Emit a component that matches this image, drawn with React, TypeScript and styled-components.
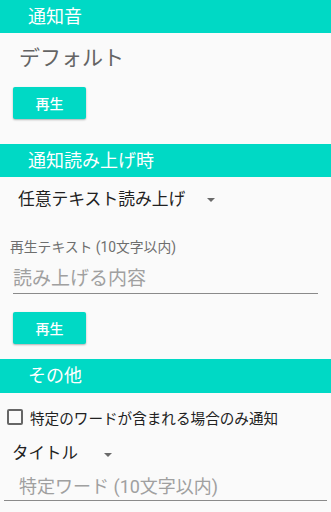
import React from "react";
import styled, { createGlobalStyle } from "styled-components";

const Global = createGlobalStyle`
  html, body { margin: 0; padding: 0; background: #fafafa; }
  body { font-family: Roboto, "Noto Sans CJK JP", sans-serif; }
  * { box-sizing: border-box; }
`;

const TEAL = "#00d9c5";

const Page = styled.div`
  width: 331px;
  height: 512px;
  overflow: hidden;
  background: #fafafa;
  display: flex;
  flex-direction: column;
`;

const Header = styled.div<{ $h?: number }>`
  height: ${(p) => p.$h ?? 33}px;
  background: ${TEAL};
  color: #ffffff;
  font-size: 18px;
  line-height: ${(p) => p.$h ?? 33}px;
  padding-left: 28px;
  flex-shrink: 0;
`;

const Section = styled.div<{ $pb: number }>`
  display: flex;
  flex-direction: column;
  align-items: flex-start;
  padding-bottom: ${(p) => p.$pb}px;
`;

const SoundName = styled.div`
  margin: 10px 0 0 19px;
  font-size: 21px;
  line-height: 30px;
  color: #646464;
`;

const PlayButton = styled.button<{ $mt: number }>`
  margin: ${(p) => p.$mt}px 0 0 13px;
  width: 73px;
  height: 32px;
  border: none;
  border-radius: 2px;
  background: ${TEAL};
  color: #ffffff;
  font-family: Roboto, "Noto Sans CJK JP", sans-serif;
  font-size: 14px;
  font-weight: 500;
  box-shadow: 0 1px 2px rgba(0, 0, 0, 0.3);
  padding: 0;
`;

const Spinner = styled.div<{ $mt: number; $ml: number; $lh: number; $fs: number; $gap: number }>`
  display: flex;
  align-items: center;
  margin: ${(p) => p.$mt}px 0 0 ${(p) => p.$ml}px;
  font-size: ${(p) => p.$fs}px;
  line-height: ${(p) => p.$lh}px;
  color: #212121;
  gap: ${(p) => p.$gap}px;
`;

const Arrow = styled.span`
  width: 0;
  height: 0;
  border-left: 4.5px solid transparent;
  border-right: 4.5px solid transparent;
  border-top: 4.5px solid #6a6a6a;
  margin-top: 1px;
`;

const FieldLabel = styled.div`
  margin: 23px 0 0 10px;
  font-size: 13.8px;
  line-height: 20px;
  color: #6e6e6e;
`;

const Field = styled.div<{ $mt: number; $mx: number; $pl: number; $fs: number; $h: number }>`
  align-self: stretch;
  margin: ${(p) => p.$mt}px ${(p) => p.$mx}px 0 ${(p) => p.$mx}px;
  padding-left: ${(p) => p.$pl}px;
  height: ${(p) => p.$h}px;
  line-height: ${(p) => p.$h - 1}px;
  font-size: ${(p) => p.$fs}px;
  color: #a0a0a0;
  border-bottom: 1px solid #8a8a8a;
  white-space: nowrap;
`;

const CheckRow = styled.label`
  display: flex;
  align-items: center;
  margin: 12px 0 0 7px;
  height: 24px;
  font-size: 14.6px;
  color: #212121;
  gap: 7px;
`;

const Box = styled.span`
  width: 16px;
  height: 16px;
  border: 2px solid #666666;
  border-radius: 2px;
  flex-shrink: 0;
`;

export default function App() {
  return (
    <Page>
      <Global />
      <Header>通知音</Header>
      <Section $pb={25}>
        <SoundName>デフォルト</SoundName>
        <PlayButton $mt={14}>再生</PlayButton>
      </Section>

      <Header>通知読み上げ時</Header>
      <Section $pb={15}>
        <Spinner $mt={7} $ml={18} $lh={30} $fs={16.8} $gap={22}>
          任意テキスト読み上げ
          <Arrow />
        </Spinner>
        <FieldLabel>再生テキスト (10文字以内)</FieldLabel>
        <Field $mt={8} $mx={13} $pl={0} $fs={19} $h={29}>
          読み上げる内容
        </Field>
        <PlayButton $mt={18}>再生</PlayButton>
      </Section>

      <Header $h={34}>その他</Header>
      <Section $pb={0}>
        <CheckRow>
          <Box />
          特定のワードが含まれる場合のみ通知
        </CheckRow>
        <Spinner $mt={11} $ml={12} $lh={28} $fs={16.5} $gap={26}>
          タイトル
          <Arrow />
        </Spinner>
        <Field $mt={6} $mx={4} $pl={15} $fs={18} $h={27}>
          特定ワード (10文字以内)
        </Field>
      </Section>
    </Page>
  );
}
